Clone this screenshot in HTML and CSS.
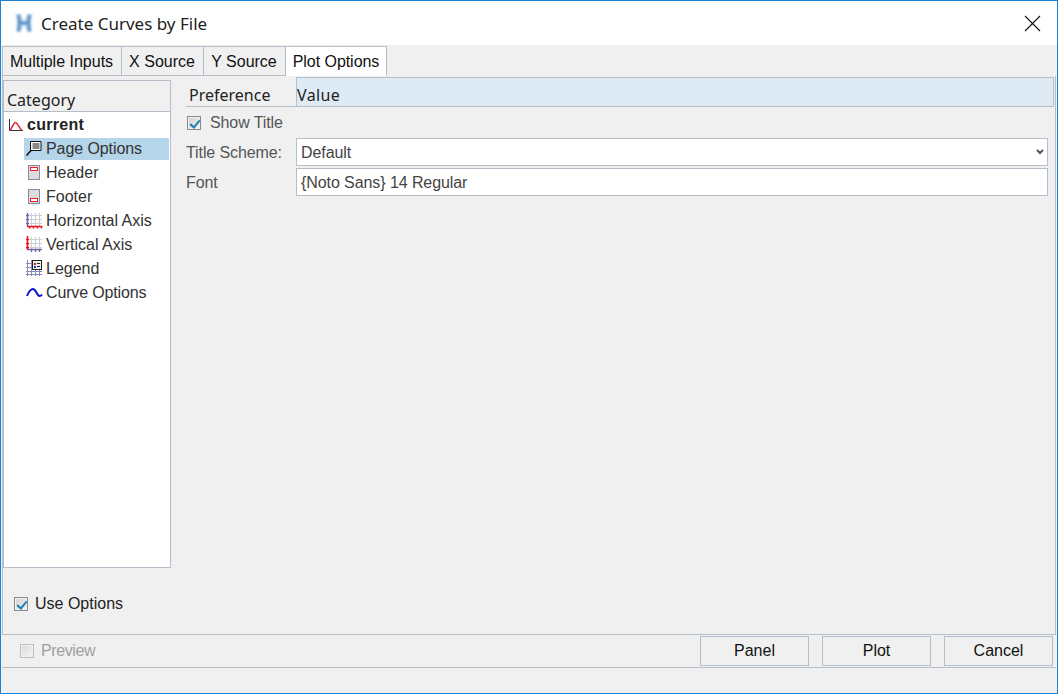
FILE: index.html
```html
<!DOCTYPE html>
<html lang="en">
<head>
<meta charset="utf-8">
<title>Create Curves by File</title>
<link rel="stylesheet" href="styles.css">
</head>
<body>
<div class="window">
  <header class="titlebar">
    <svg class="app-icon" width="18" height="20" viewBox="0 0 18 20"><path d="M1 1h5l1.500 6h3L12 1h5l-1 9 1 9h-5l-1.500-6h-3L6 19H1l1-9z" fill="#a9c6e2"/><path d="M3.500 2L4.500 10 3.500 18M14.500 2L13.500 10 14.500 18M5 10h8" stroke="#4f8ac2" stroke-width="2" fill="none"/></svg>
    <span class="title">Create Curves by File</span>
    <svg class="close" width="17" height="17" viewBox="0 0 17 17"><path d="M1 1l15 15M16 1L1 16" stroke="#111" stroke-width="1.100" fill="none"/></svg>
  </header>
  <nav class="tabs">
    <div class="tab t1">Multiple Inputs</div>
    <div class="tab t2">X Source</div>
    <div class="tab t3">Y Source</div>
    <div class="tab t4 active">Plot Options</div>
  </nav>
  <main class="pane">
    <div class="columns">
      <aside class="category">
        <div class="cat-head">Category</div>
        <ul class="tree">
          <li class="node root">
            <svg class="ico" width="16" height="14" viewBox="0 0 16 14"><path d="M1.500 0v11.500H15" stroke="#333" fill="none"/><path d="M2 11.500C4 9 5.500 3.500 7.500 3.500S11 9 13.500 11" stroke="#e8203a" stroke-width="1.500" fill="none"/></svg>
            <span>current</span>
          </li>
          <li class="node sel">
            <svg class="ico" width="17" height="17" viewBox="0 0 17 17"><path d="M5.500 1.500h10.500v9H5.500z" fill="#fff" stroke="#111"/><path d="M7.500 4h7M7.500 6h7M7.500 8h7" stroke="#111"/><path d="M6 10.500l-4.500 5" stroke="#111" stroke-width="1.600"/></svg>
            <span>Page Options</span>
          </li>
          <li class="node">
            <svg class="ico" width="17" height="17" viewBox="0 0 17 17"><rect x="2.500" y="1.500" width="11" height="14" fill="#dcdcdc" stroke="#8c8c94"/><rect x="4.500" y="3.500" width="7" height="3" fill="#fff" stroke="#f01c30"/></svg>
            <span>Header</span>
          </li>
          <li class="node">
            <svg class="ico" width="17" height="17" viewBox="0 0 17 17"><rect x="2.500" y="1.500" width="11" height="14" fill="#dcdcdc" stroke="#8c8c94"/><rect x="4.500" y="10.500" width="7" height="3" fill="#fff" stroke="#f01c30"/></svg>
            <span>Footer</span>
          </li>
          <li class="node">
            <svg class="ico" width="17" height="17" viewBox="0 0 17 17"><path d="M5.500 1v13M9.500 1v13M13.500 1v13M2 3.500h14M2 7.500h14M2 11.500h14" stroke="#cfcfd4" stroke-width="1.200"/><path d="M1.500 1v13M0 3.500h3M0 7.500h3M0 11.500h3" stroke="#6a6aa8" stroke-width="1.400"/><path d="M1 14.500h15M3.500 14v2.500M7.500 14v2.500M11.500 14v2.500M15.500 14v2.500" stroke="#f0101c" stroke-width="1.500"/></svg>
            <span>Horizontal Axis</span>
          </li>
          <li class="node">
            <svg class="ico" width="17" height="17" viewBox="0 0 17 17"><path d="M5.500 1v12M9.500 1v12M13.500 1v12M2 3.500h14M2 7.500h14M2 11.500h14" stroke="#cfcfd4" stroke-width="1.200"/><path d="M1 13.500h15M5.500 13v3M9.500 13v3M13.500 13v3" stroke="#6a6aa8" stroke-width="1.400"/><path d="M1.500 0v14M0 3.500h3M0 7.500h3M0 11.500h3" stroke="#f0101c" stroke-width="1.500"/></svg>
            <span>Vertical Axis</span>
          </li>
          <li class="node">
            <svg class="ico" width="17" height="17" viewBox="0 0 17 17"><path d="M1.500 0v16M5.500 0v16M9.500 10v6M13.500 10v6M0 3.500h6M0 7.500h6M0 11.500h16M0 14.500h16" stroke="#8888b8"/><rect x="6.500" y="0.500" width="9" height="9" fill="#f0f0f0" stroke="#222"/><path d="M8 3h2v2H8z" fill="#d01c2c"/><path d="M11 3h3v1h-3zM11 6h3v1h-3z" fill="#222"/><path d="M8 6h2v2H8z" fill="#1c3cc8"/></svg>
            <span>Legend</span>
          </li>
          <li class="node">
            <svg class="ico" width="17" height="17" viewBox="0 0 17 17"><path d="M1 12C3 7 5 5 7 5s3 3 5 6c1.500 1.500 3 1 4-.5" stroke="#0a14c8" stroke-width="2" fill="none"/></svg>
            <span class="curve-label">Curve Options</span>
          </li>
        </ul>
      </aside>
      <section class="options">
        <div class="opt-head">
          <div class="col-pref">Preference</div>
          <div class="col-value">Value</div>
        </div>
        <label class="show-title"><span class="check on"></span><span>Show Title</span></label>
        <div class="row">
          <span class="row-label">Title Scheme:</span>
          <div class="field">Default<svg class="chev" width="8" height="6" viewBox="0 0 8 6"><path d="M1 1l3 3 3-3" stroke="#555" stroke-width="2" fill="none"/></svg></div>
        </div>
        <div class="row">
          <span class="row-label">Font</span>
          <div class="field">{Noto Sans} 14 Regular</div>
        </div>
      </section>
    </div>
    <label class="use-options"><span class="check on"></span><span>Use Options</span></label>
  </main>
  <footer class="actions">
    <label class="preview"><span class="check off"></span><span>Preview</span></label>
    <div class="buttons">
      <button class="btn">Panel</button>
      <button class="btn">Plot</button>
      <button class="btn">Cancel</button>
    </div>
  </footer>
  <div class="status"></div>
</div>
</body>
</html>
```
FILE: styles.css
```css
* { box-sizing: border-box; }
html, body { margin: 0; padding: 0; }
body {
  width: 1058px;
  height: 694px;
  overflow: hidden;
  font-family: "Liberation Sans", Arial, sans-serif;
  font-size: 16px;
  color: #111;
  background: #f0f0f0;
}
.window {
  width: 1058px;
  height: 694px;
  border: 1px solid #1c83d4;
  display: flex;
  flex-direction: column;
  background: #f0f0f0;
}
.titlebar {
  height: 44px;
  flex: none;
  background: #fff;
  display: flex;
  align-items: center;
  padding: 0 16px 0 14px;
}
.app-icon { margin-right: 8px; filter: blur(0.8px); }
.title {
  font-family: "Noto Sans", sans-serif;
  font-size: 17px;
  color: #222;
  flex: 1;
}
.tabs {
  height: 30px;
  flex: none;
  margin-top: 1px;
  padding-left: 1px;
  display: flex;
}
.tab {
  height: 30px;
  border: 1px solid #b4bfc9;
  border-left: 0;
  display: flex;
  align-items: center;
  justify-content: center;
  padding: 1px 1px 0 0;
  background: #f0f0f0;
  color: #111;
}
.t1 { width: 120px; border-left: 1px solid #b4bfc9; }
.t2 { width: 82px; }
.t3 { width: 82px; }
.t4 { width: 101px; padding-right: 0; letter-spacing: -0.05px; }
.tab.active { background: #fff; border-bottom-color: #fff; }
.pane {
  height: 559px;
  flex: none;
  margin: 0 1px;
  border: 1px solid #b4bfc9;
  border-top: 0;
  display: flex;
  flex-direction: column;
}
.columns {
  display: flex;
  height: 492px;
  flex: none;
}
.category {
  width: 168px;
  height: 488px;
  margin-top: 4px;
  flex: none;
  border: 1px solid #b4bfc9;
  background: #fff;
}
.cat-head {
  height: 31px;
  padding: 9px 0 0 3px;
  background: #f0f0f0;
  border-bottom: 1px solid #b4bfc9;
  font-family: "Noto Sans", sans-serif;
  font-size: 16px;
  line-height: 20px;
  color: #222;
}
.tree { list-style: none; margin: 0; padding: 1px 0 0; }
.node {
  height: 24px;
  display: flex;
  align-items: center;
  padding-left: 22px;
  margin-right: 1px;
  color: #333;
  position: relative;
}
.node .ico { position: absolute; left: 22px; top: 3px; }
.node span { margin-left: 20px; }
.node .curve-label { letter-spacing: -0.15px; }
.node.sel {
  height: 22px;
  margin: 1px 1px 1px 20px;
  padding-left: 2px;
  background: #b5d5ea;
  letter-spacing: -0.08px;
}
.node.sel .ico { left: 1px; top: 2px; }
.root { padding-left: 0; }
.root .ico { left: 4px; top: 6px; }
.root span { margin-left: 23px; font-weight: 700; color: #222; letter-spacing: 0.3px; }
.options {
  flex: 1;
  padding: 1px 1px 0 15px;
  min-width: 0;
}
.opt-head {
  height: 30px;
  display: flex;
  font-family: "Noto Sans", sans-serif;
  font-size: 16px;
  color: #222;
  border-bottom: 1px solid #b4bfc9;
}
.col-pref {
  width: 110px;
  padding: 7px 0 0 3px;
  flex: none;
}
.col-value {
  flex: 1;
  background: #deebf5;
  border: 1px solid #b4bfc9;
  border-bottom: 0;
  padding: 6px 0 0 0;
  letter-spacing: 0.4px;
}
.show-title {
  height: 31px;
  display: flex;
  align-items: center;
  gap: 9px;
  padding-left: 1px;
  color: #555;
  letter-spacing: -0.1px;
}
.check {
  width: 14px;
  height: 14px;
  flex: none;
  display: block;
  border: 1px solid #8a8a8a;
  box-shadow: inset 0 0 0 1px #f2f2f2;
  background: linear-gradient(135deg, #cfcfcf, #f4f4f4);
  position: relative;
}
.check.on::after {
  content: "";
  position: absolute;
  left: 4px;
  top: 1px;
  width: 4px;
  height: 8px;
  border: solid #1f7fb5;
  border-width: 0 2px 2px 0;
  transform: rotate(40deg);
}
.check.off { border-color: #bbb; background: linear-gradient(135deg, #d8d8d8, #f6f6f6); }
.row {
  display: flex;
  align-items: center;
  height: 28px;
  margin-bottom: 2px;
  padding-right: 6px;
}
.row-label {
  width: 110px;
  flex: none;
  padding-top: 1px;
  color: #555;
  letter-spacing: -0.1px;
}
.field {
  flex: 1;
  height: 28px;
  border: 1px solid #b4bfc9;
  background: #fff;
  color: #444;
  padding: 1px 0 0 4px;
  line-height: 26px;
  position: relative;
  letter-spacing: -0.08px;
}
.chev { position: absolute; right: 3px; top: 10px; }
.use-options {
  display: flex;
  align-items: center;
  gap: 7px;
  margin-top: 27px;
  padding-left: 11px;
  color: #222;
}
.actions {
  height: 33px;
  flex: none;
  margin: 0 1px;
  display: flex;
  align-items: center;
  justify-content: space-between;
  padding: 0 3px 0 18px;
  border-bottom: 1px solid #b4bfc9;
}
.preview {
  display: flex;
  align-items: center;
  gap: 7px;
  color: #a0a0a0;
  letter-spacing: -0.4px;
}
.buttons { display: flex; gap: 13px; }
.btn {
  width: 109px;
  height: 30px;
  border: 1px solid #b4bfc9;
  background: #f0f0f0;
  font: 16px "Liberation Sans", Arial, sans-serif;
  color: #111;
  padding: 0;
}
.status { flex: 1; }
```
